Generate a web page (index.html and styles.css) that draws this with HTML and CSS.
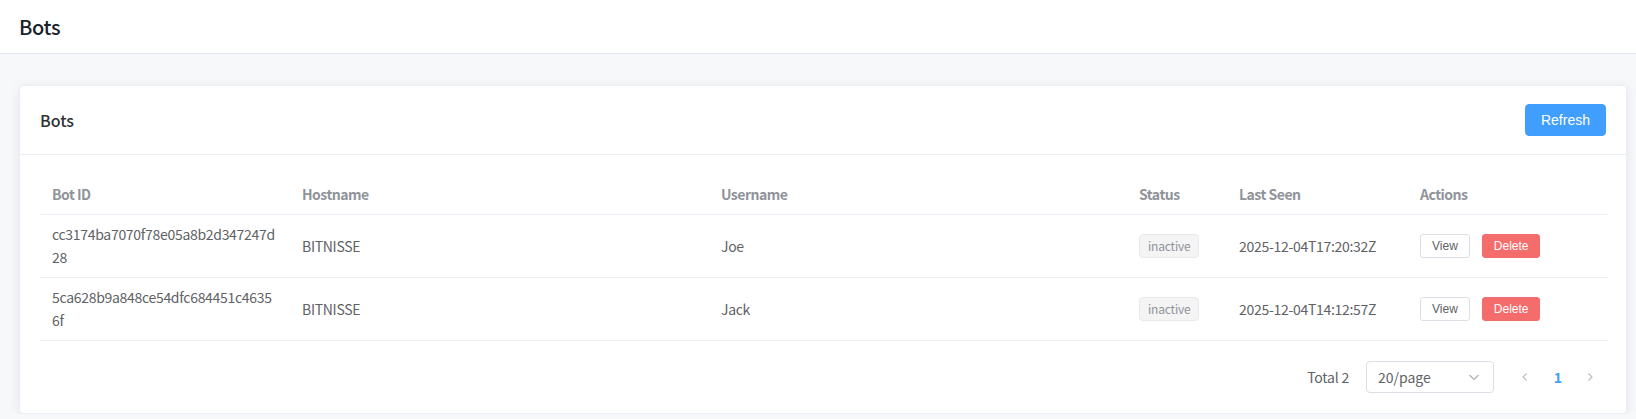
FILE: index.html
```html
<!DOCTYPE html>
<html lang="en">
<head>
<meta charset="utf-8">
<title>Bots</title>
<link rel="stylesheet" href="styles.css">
</head>
<body>
<header class="topbar">
  <h1 class="topbar-title">Bots</h1>
</header>
<main class="main">
  <section class="card">
    <div class="card-header">
      <span class="card-title">Bots</span>
      <button class="btn btn-primary">Refresh</button>
    </div>
    <div class="card-body">
      <table class="table">
        <colgroup>
          <col class="c-id"><col class="c-host"><col class="c-user"><col class="c-status"><col class="c-seen"><col class="c-actions">
        </colgroup>
        <thead>
          <tr><th>Bot ID</th><th>Hostname</th><th>Username</th><th>Status</th><th>Last Seen</th><th>Actions</th></tr>
        </thead>
        <tbody>
          <tr>
            <td class="id-cell">cc3174ba7070f78e05a8b2d347247d28</td>
            <td>BITNISSE</td>
            <td>Joe</td>
            <td><span class="tag">inactive</span></td>
            <td>2025-12-04T17:20:32Z</td>
            <td><div class="actions"><button class="btn btn-small">View</button><button class="btn btn-small btn-danger">Delete</button></div></td>
          </tr>
          <tr>
            <td class="id-cell">5ca628b9a848ce54dfc684451c46356f</td>
            <td>BITNISSE</td>
            <td>Jack</td>
            <td><span class="tag">inactive</span></td>
            <td>2025-12-04T14:12:57Z</td>
            <td><div class="actions"><button class="btn btn-small">View</button><button class="btn btn-small btn-danger">Delete</button></div></td>
          </tr>
        </tbody>
      </table>
      <div class="pagination">
        <span class="total">Total 2</span>
        <div class="select">
          <span>20/page</span>
          <svg class="chev" width="14" height="14" viewBox="0 0 14 14"><path d="M2.5 5l4.5 4.5L11.5 5" fill="none" stroke="currentColor" stroke-width="1.1"/></svg>
        </div>
        <button class="pg-btn pg-prev" aria-label="prev"><svg width="12" height="12" viewBox="0 0 12 12"><path d="M7.5 2.5L4 6l3.5 3.5" fill="none" stroke="currentColor" stroke-width="1.1"/></svg></button>
        <span class="pg-num">1</span>
        <button class="pg-btn" aria-label="next"><svg width="12" height="12" viewBox="0 0 12 12"><path d="M4.5 2.5L8 6l-3.5 3.5" fill="none" stroke="currentColor" stroke-width="1.1"/></svg></button>
      </div>
    </div>
  </section>
</main>
</body>
</html>
```
FILE: styles.css
```css
* { box-sizing: border-box; }
html, body { margin: 0; }
body {
  background: #f7f8fa;
  font-family: "Noto Sans CJK SC", "Noto Sans", sans-serif;
  color: #606266;
  font-size: 14px;
}
.topbar {
  height: 54px;
  background: #fff;
  border-bottom: 1px solid #e4e7ed;
  display: flex;
  align-items: center;
  padding-left: 19px;
}
.topbar-title {
  margin: 0;
  font-size: 20px;
  font-weight: 500;
  color: #1a1f2b;
  line-height: 1;
  letter-spacing: -0.3px;
}
.main {
  padding: 31px 9px 0 19px;
}
.card {
  background: #fff;
  border: 1px solid #ebeef5;
  border-radius: 4px;
  box-shadow: 0 2px 12px rgba(0,0,0,0.08);
}
.card-header {
  display: flex;
  justify-content: space-between;
  align-items: center;
  padding: 18px 20px;
  border-bottom: 1px solid #ebeef5;
}
.card-title {
  font-size: 16px;
  font-weight: 500;
  color: #303133;
}
.card-body { padding: 20px; }
.btn {
  font-family: "Liberation Sans", Arial, sans-serif;
  border-radius: 4px;
  border: 1px solid #dcdfe6;
  background: #fff;
  color: #606266;
  cursor: pointer;
  display: inline-flex;
  align-items: center;
  justify-content: center;
}
.btn-primary {
  height: 32px;
  padding: 0 15px;
  font-size: 14px;
  background: #409eff;
  border-color: #409eff;
  color: #fff;
}
.btn-small {
  height: 24px;
  padding: 0 11px;
  font-size: 12px;
  border-radius: 3px;
}
.btn-danger {
  background: #f56c6c;
  border-color: #f56c6c;
  color: #fff;
}
.table {
  width: 100%;
  border-collapse: collapse;
  table-layout: fixed;
}
.c-id { width: 250px; }
.c-host { width: 419px; }
.c-user { width: 418px; }
.c-status { width: 100px; }
.c-seen { width: 181px; }
.c-actions { width: 200px; }
.table th, .table td {
  text-align: left;
  padding: 8px 12px;
  line-height: 23px;
  border-bottom: 1px solid #ebeef5;
  vertical-align: middle;
}
.table th {
  color: #909399;
  font-weight: 600;
  letter-spacing: -0.5px;
}
.table td {
  color: #606266;
  letter-spacing: -0.3px;
}
.id-cell {
  word-break: break-all;
}
.tag {
  display: inline-flex;
  align-items: center;
  height: 24px;
  padding: 0 8px;
  font-size: 12px;
  line-height: 1;
  letter-spacing: -0.2px;
  background: #f4f4f5;
  border: 1px solid #e9e9eb;
  border-radius: 4px;
  color: #909399;
}
.actions {
  display: flex;
  gap: 12px;
  align-items: center;
  letter-spacing: 0;
}
.pagination {
  margin-top: 20px;
  display: flex;
  justify-content: flex-end;
  align-items: center;
  height: 32px;
}
.total {
  margin-right: 17px;
  color: #606266;
  letter-spacing: -0.2px;
}
.select {
  width: 128px;
  height: 32px;
  border: 1px solid #dcdfe6;
  border-radius: 4px;
  padding: 0 12px 0 11px;
  display: flex;
  align-items: center;
  justify-content: space-between;
  color: #606266;
}
.chev { color: #a8abb2; }
.pg-btn {
  width: 32px;
  height: 32px;
  background: none;
  border: none;
  padding: 0;
  color: #b6b9bf;
  display: inline-flex;
  align-items: center;
  justify-content: center;
}
.pg-prev { margin-left: 15px; margin-right: 1px; }
.pg-num {
  width: 32px;
  text-align: center;
  color: #409eff;
  font-weight: 700;
}
```
